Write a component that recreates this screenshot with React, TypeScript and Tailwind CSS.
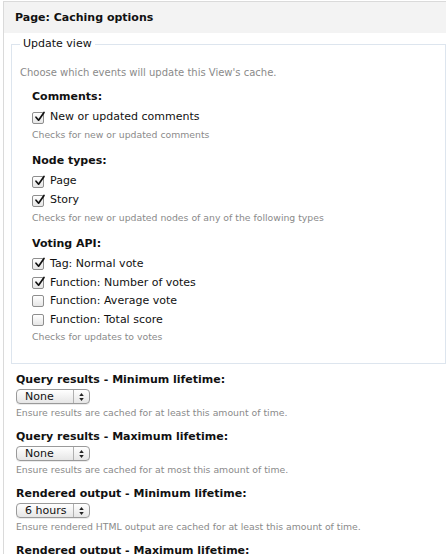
import React from "react";

const font = { fontFamily: '"DejaVu Sans", Verdana, sans-serif' };

function Check({ checked }: { checked: boolean }) {
  return (
    <span className="relative inline-flex w-[12px] h-[12px] rounded-[2px] border border-[#8e8e8e] bg-gradient-to-b from-white to-[#e6e6e6] shrink-0">
      {checked && (
        <svg
          viewBox="0 0 12 12"
          className="absolute left-[1px] top-[-2px] w-[12px] h-[12px]"
        >
          <path
            d="M2 6.2 L4.6 9.2 L10 1.5"
            fill="none"
            stroke="#111"
            strokeWidth="1.7"
            strokeLinecap="round"
            strokeLinejoin="round"
          />
        </svg>
      )}
    </span>
  );
}

function CheckRow({ label, checked, tight }: { label: string; checked: boolean; tight?: boolean }) {
  return (
    <div
      className={`flex items-center gap-[6px] text-[11px] text-[#111] ${
        tight ? "h-[18.5px]" : "h-[19px]"
      }`}
    >
      <Check checked={checked} />
      <span>{label}</span>
    </div>
  );
}

function Select({ value }: { value: string }) {
  return (
    <div className="flex items-center w-[74px] h-[15px] rounded-[4px] border border-[#9a9a9a] bg-gradient-to-b from-white to-[#e6e6e6] text-[11px] text-[#111] shadow-[0_1px_0_rgba(0,0,0,0.08)]">
      <span className="flex-1 pl-[8px] leading-[13px]">{value}</span>
      <span className="w-[16px] h-full border-l border-[#b0b0b0] flex flex-col items-center justify-center gap-[2px]">
        <svg viewBox="0 0 6 4" className="w-[5px] h-[3px]">
          <path d="M0 4 L3 0 L6 4 Z" fill="#222" />
        </svg>
        <svg viewBox="0 0 6 4" className="w-[5px] h-[3px]">
          <path d="M0 0 L3 4 L6 0 Z" fill="#222" />
        </svg>
      </span>
    </div>
  );
}

function Group({
  title,
  items,
  desc,
  className,
  tight,
}: {
  title: string;
  items: [string, boolean][];
  desc: string;
  className: string;
  tight?: boolean;
}) {
  return (
    <div className={`ml-[12px] ${className}`}>
      <div className="font-bold text-[11px] text-[#111] h-[22px] leading-[22px]">{title}</div>
      {items.map(([label, checked]) => (
        <CheckRow key={label} label={label} checked={checked} tight={tight} />
      ))}
      <div className="text-[9.3px] text-[#8a8a8a] h-[16px] leading-[16px]">{desc}</div>
    </div>
  );
}

function Lifetime({ title, value, desc }: { title: string; value: string; desc: string }) {
  return (
    <div className="mb-[8px]">
      <div className="font-bold text-[11px] text-[#111] h-[18px] leading-[18px]">{title}</div>
      <Select value={value} />
      <div className="text-[9.3px] text-[#8a8a8a] h-[14px] leading-[14px] mt-[2px]">{desc}</div>
    </div>
  );
}

export default function App() {
  return (
    <div className="w-[446px] h-[554px] overflow-hidden bg-white" style={font}>
      <div className="ml-[3px] mt-[1px] border-l border-t border-[#dadada] h-full">
        <div className="h-[31px] bg-[#f3f3f3] pl-[11px] pt-[1px] flex items-center font-bold text-[11px] text-[#111]">
          Page: Caching options
        </div>
        <fieldset className="ml-[7px] mt-[3px] border border-[#dde5ee] pl-[8px] pt-[13px] pb-[18px]">
          <legend className="px-[3px] text-[11px] leading-[16px] text-[#111]">Update view</legend>
          <div className="text-[10px] h-[16px] leading-[16px] text-[#8a8a8a]">
            Choose which events will update this View's cache.
          </div>
          <Group
            className="mt-[5px]"
            title="Comments:"
            items={[["New or updated comments", true]]}
            desc="Checks for new or updated comments"
          />
          <Group
            className="mt-[7px]"
            title="Node types:"
            items={[
              ["Page", true],
              ["Story", true],
            ]}
            desc="Checks for new or updated nodes of any of the following types"
          />
          <Group
            className="mt-[7px]"
            tight
            title="Voting API:"
            items={[
              ["Tag: Normal vote", true],
              ["Function: Number of votes", true],
              ["Function: Average vote", false],
              ["Function: Total score", false],
            ]}
            desc="Checks for updates to votes"
          />
        </fieldset>
        <div className="pl-[12px] pt-[7px]">
          <Lifetime
            title="Query results - Minimum lifetime:"
            value="None"
            desc="Ensure results are cached for at least this amount of time."
          />
          <Lifetime
            title="Query results - Maximum lifetime:"
            value="None"
            desc="Ensure results are cached for at most this amount of time."
          />
          <Lifetime
            title="Rendered output - Minimum lifetime:"
            value="6 hours"
            desc="Ensure rendered HTML output are cached for at least this amount of time."
          />
          <Lifetime
            title="Rendered output - Maximum lifetime:"
            value="6 hours"
            desc="Ensure rendered HTML output are cached for at most this amount of time."
          />
        </div>
      </div>
    </div>
  );
}
